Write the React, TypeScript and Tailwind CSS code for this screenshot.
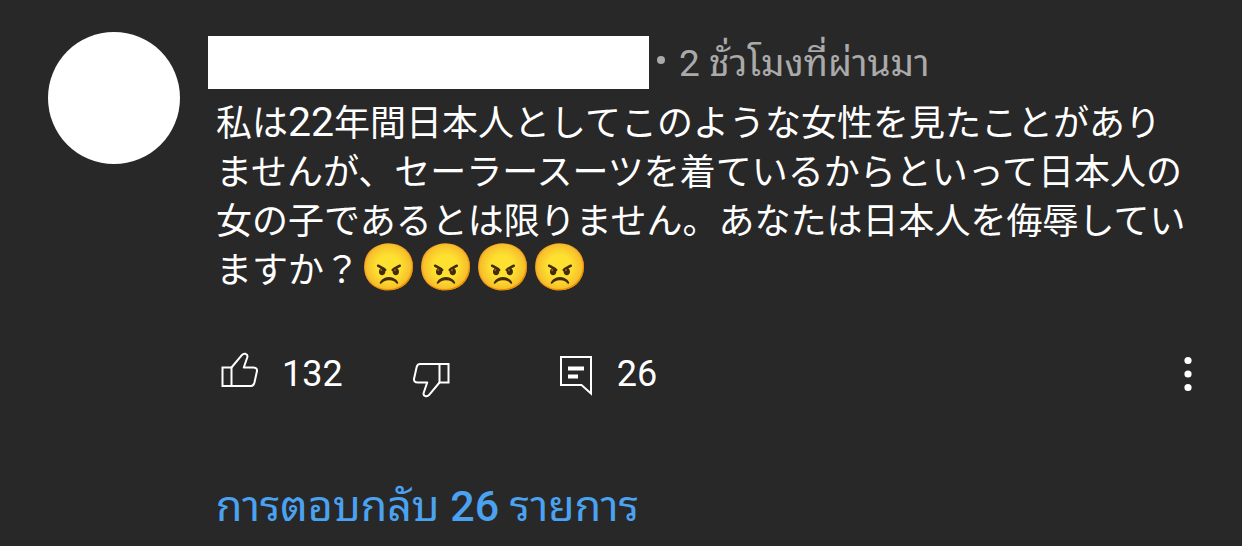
const outline = {
  fill: "none",
  stroke: "currentColor",
  strokeWidth: 2,
  strokeLinejoin: "round" as const,
};

function ThumbIcon({ down = false }: { down?: boolean }) {
  return (
    <svg
      viewBox="0 0 38 36"
      className={down ? "h-9 w-[38px] rotate-180" : "h-9 w-[38px]"}
      aria-hidden="true"
      {...outline}
    >
      <path d="M2.5 15.5H11.5V34H2.5Z" strokeLinejoin="miter" />
      <path d="M11.5 15.5 21.6 3.4Q23.4 1.2 25.6 1.8Q28 2.8 27.3 5.2L23.8 15.5H33.2Q37.4 15.8 37 19L34.4 30.8Q33.6 34 31 34H11.5" />
    </svg>
  );
}

function CommentIcon() {
  return (
    <svg viewBox="0 0 34 42" className="h-[42px] w-[34px]" aria-hidden="true" {...outline} strokeLinejoin="miter">
      <path d="M2 2H32V38.5L22.5 30H2Z" />
      <path d="M9 13.5H25M9 21.5H19" strokeWidth="4" />
    </svg>
  );
}

function MoreIcon() {
  return (
    <svg viewBox="0 0 8 36" className="h-9 w-2" fill="currentColor" aria-hidden="true">
      <circle cx="4" cy="4.5" r="3.6" />
      <circle cx="4" cy="18" r="3.6" />
      <circle cx="4" cy="31.5" r="3.6" />
    </svg>
  );
}

export default function App() {
  return (
    <main className="min-h-screen bg-[#282828] font-[Roboto,'Noto_Sans_Thai_Looped','Noto_Sans_CJK_JP',sans-serif] text-white">
      <article className="flex items-start gap-7 pt-8 pr-12 pl-12">
        <div className="size-[132px] shrink-0 rounded-full bg-white" role="img" aria-label="Avatar" />
        <div className="min-w-0 flex-1">
          <header className="flex h-[60px] items-center gap-2">
            <div className="h-[53px] w-[441px] bg-white" />
            <div className="flex items-center gap-[14px] text-[37px] text-[#aaaaaa]">
              <span className="mb-1 size-2 rounded-full bg-[#aaaaaa]" />
              <time className="pt-1 leading-[60px] whitespace-nowrap">2 ชั่วโมงที่ผ่านมา</time>
            </div>
          </header>

          <p lang="ja" className="pt-2 pl-2 text-[36px] leading-[49px] whitespace-nowrap">
            私は<span className="text-[41px] leading-[0]">22</span>年間日本人としてこのような女性を見たことがあり
            <br />
            ませんが、セーラースーツを着ているからといって日本人の
            <br />
            女の子であるとは限りません。あなたは日本人を侮辱してい
            <br />
            ますか？<span className="text-[46px] leading-[0]">😠😠😠😠</span>
          </p>

          <div className="flex items-center pt-12 pl-3 text-[36px] leading-[60px]">
            <button type="button" className="flex items-center gap-6" aria-label="Like, 132">
              <span className="pb-2">
                <ThumbIcon />
              </span>
              132
            </button>
            <button type="button" className="ml-[70px] pt-3" aria-label="Dislike">
              <ThumbIcon down />
            </button>
            <button type="button" className="ml-[108px] flex items-center gap-6" aria-label="Replies, 26">
              <span className="pt-1">
                <CommentIcon />
              </span>
              26
            </button>
            <button type="button" className="mr-0.5 ml-auto" aria-label="More">
              <MoreIcon />
            </button>
          </div>

          <a href="#replies" className="mt-[72px] ml-2 inline-block text-[43px] leading-[60px] whitespace-nowrap text-[#4ba2f0]">
            การตอบกลับ <span className="font-medium">26</span> รายการ
          </a>
        </div>
      </article>
    </main>
  );
}
